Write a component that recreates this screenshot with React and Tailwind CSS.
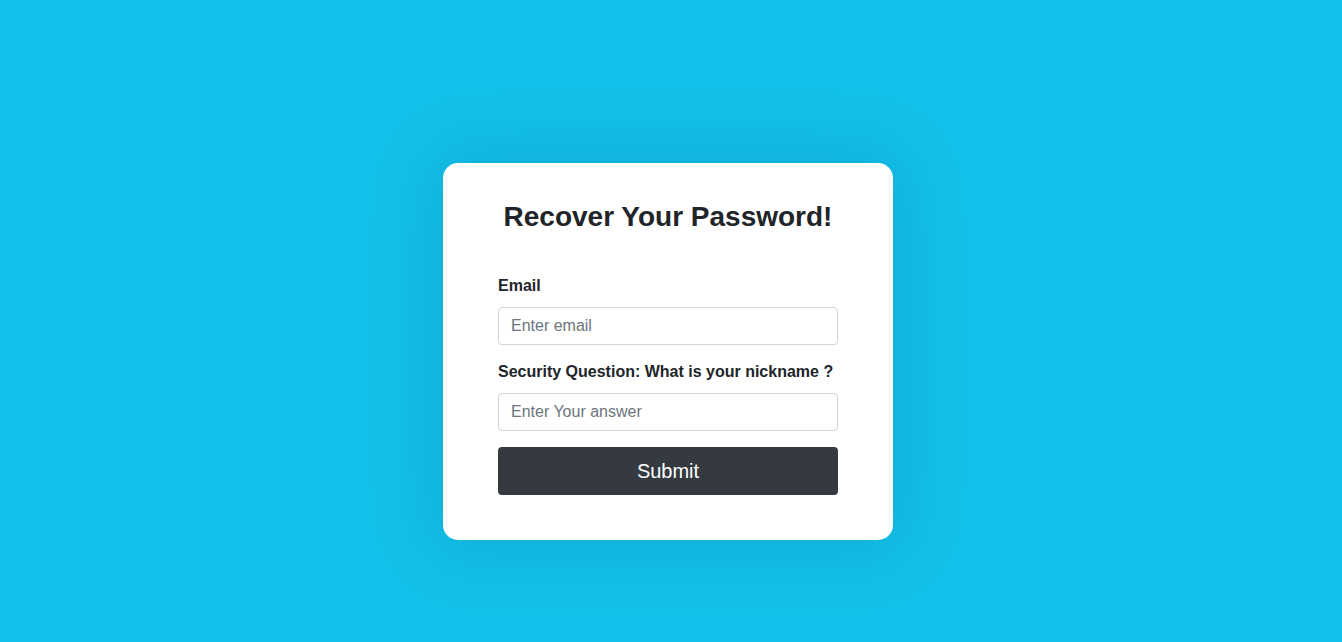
import React from "react";

export default function App() {
  return (
    <div
      className="min-h-screen w-full bg-[#13c2ea] flex items-start justify-center pt-[163px] pr-[6px]"
      style={{ fontFamily: '"Liberation Sans", Arial, sans-serif' }}
    >
      <div className="w-[450px] bg-white rounded-[15px] px-[55px] pt-[37px] pb-[45px] shadow-[0_0_70px_15px_rgba(10,120,160,0.25)] text-[#212529]">
        <h3 className="text-[28px] leading-[34px] font-bold text-center">
          Recover Your Password!
        </h3>
        <form onSubmit={(e) => e.preventDefault()} className="mt-[40px]">
          <label className="block text-[16px] leading-[24px] font-bold mb-[9px]">
            Email
          </label>
          <input
            type="email"
            placeholder="Enter email"
            className="block w-full h-[38px] px-[12px] text-[16px] border border-[#ced4da] rounded-[4px] placeholder:text-[#6c757d] outline-none"
          />
          <label className="block text-[16px] leading-[24px] font-bold mt-[15px] mb-[9px]">
            Security Question: What is your nickname ?
          </label>
          <input
            type="text"
            placeholder="Enter Your answer"
            className="block w-full h-[38px] px-[12px] text-[16px] border border-[#ced4da] rounded-[4px] placeholder:text-[#6c757d] outline-none"
          />
          <button
            type="submit"
            className="block w-full h-[48px] mt-[16px] bg-[#343a40] text-white text-[20px] rounded-[4px]"
          >
            Submit
          </button>
        </form>
      </div>
    </div>
  );
}
